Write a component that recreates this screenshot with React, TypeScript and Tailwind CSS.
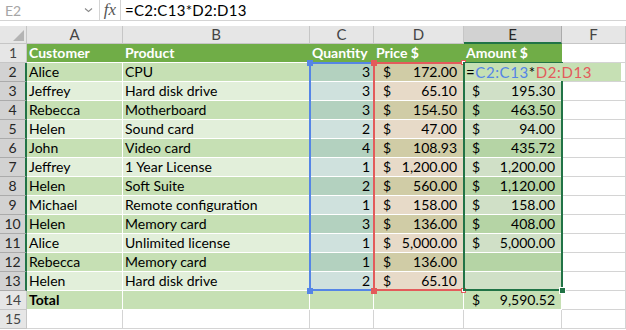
import React from "react";

const FONT = "font-['Lato','Liberation_Sans',sans-serif]";

type Row = [string, string, string, string, string];

const data: Row[] = [
  ["Alice", "CPU", "3", "172.00", "="],
  ["Jeffrey", "Hard disk drive", "3", "65.10", "195.30"],
  ["Rebecca", "Motherboard", "3", "154.50", "463.50"],
  ["Helen", "Sound card", "2", "47.00", "94.00"],
  ["John", "Video card", "4", "108.93", "435.72"],
  ["Jeffrey", "1 Year License", "1", "1,200.00", "1,200.00"],
  ["Helen", "Soft Suite", "2", "560.00", "1,120.00"],
  ["Michael", "Remote configuration", "1", "158.00", "158.00"],
  ["Helen", "Memory card", "3", "136.00", "408.00"],
  ["Alice", "Unlimited license", "1", "5,000.00", "5,000.00"],
  ["Rebecca", "Memory card", "1", "136.00", ""],
  ["Helen", "Hard disk drive", "2", "65.10", ""],
];

function ColHead({ label, active }: { label: string; active?: boolean }) {
  return (
    <div
      className={
        active
          ? "flex items-center justify-center border-r border-b-2 border-r-[#ababab] border-b-[#217346] bg-[#d2d2d2] text-[15px] text-[#262626]"
          : "flex items-center justify-center border-r border-b border-[#c6c6c6] bg-[#e6e6e6] text-[15px] text-[#444]"
      }
    >
      {label}
    </div>
  );
}

function RowHead({ n, active }: { n: number; active?: boolean }) {
  return (
    <div
      className={
        active
          ? "flex items-center justify-center border-b border-r-2 border-b-[#ababab] border-r-[#217346] bg-[#d2d2d2] text-[14px] text-[#262626]"
          : "flex items-center justify-center border-b border-r border-[#c6c6c6] bg-[#e6e6e6] text-[14px] text-[#444]"
      }
    >
      {n}
    </div>
  );
}

function Money({ value, bg, left }: { value: string; bg: string; left: string }) {
  return (
    <div className={`flex items-center justify-between border-r border-b border-white pr-[6px] text-[14px] ${left} ${bg}`}>
      {value && <span>$</span>}
      <span>{value}</span>
    </div>
  );
}

export default function App() {
  return (
    <div className={`relative h-[330px] w-[626px] overflow-hidden bg-white text-black ${FONT}`}>
      {/* formula bar */}
      <div className="flex h-[21px] border-b border-[#d4d4d4] bg-white">
        <div className="flex w-[100px] items-center justify-between border-r border-[#d4d4d4] pl-[5px] pr-[6px] text-[14px] text-[#a6a6a6]">
          <span>E2</span>
          <svg width="9" height="6" viewBox="0 0 9 6">
            <path d="M1 1.5 L4.5 4.5 L8 1.5" fill="none" stroke="#8a8a8a" strokeWidth="1.1" />
          </svg>
        </div>
        <div className="flex w-[21px] items-center justify-center border-r border-[#d4d4d4] font-['Liberation_Serif',serif] text-[17px] italic text-[#555]">
          fx
        </div>
        <div className="flex items-center pl-[4px] text-[15px] tracking-[0.3px]">=C2:C13*D2:D13</div>
      </div>
      <div className="h-[5px] bg-white" />

      {/* sheet */}
      <div className="relative grid grid-cols-[27px_96px_187px_64px_90px_98px_64px] grid-rows-[18px_repeat(15,19px)] leading-none">
        <div className="relative border-r border-b border-[#c6c6c6] bg-[#e6e6e6]">
          <svg className="absolute bottom-[2px] right-[2px]" width="11" height="11" viewBox="0 0 11 11">
            <polygon points="11,0 11,11 0,11" fill="#b4b4b4" />
          </svg>
        </div>
        <ColHead label="A" />
        <ColHead label="B" />
        <ColHead label="C" />
        <ColHead label="D" />
        <ColHead label="E" active />
        <ColHead label="F" />

        {/* row 1 */}
        <RowHead n={1} />
        {["Customer", "Product", "Quantity", "Price $", "Amount $"].map((h) => (
          <div key={h} className="flex items-center border-b border-white bg-[#70ad47] pl-[2px] text-[14px] font-bold text-white">
            {h}
          </div>
        ))}
        <div className="border-r border-b border-[#d4d4d4]" />

        {data.map((r, i) => {
          const odd = i % 2 === 0;
          return (
            <React.Fragment key={i}>
              <RowHead n={i + 2} active />
              <div className={`flex items-center border-r border-b border-white pl-[2px] text-[14px] ${odd ? "bg-[#c6e0b4]" : "bg-[#e2efda]"}`}>
                {r[0]}
              </div>
              <div className={`flex items-center border-r border-b border-white pl-[2px] text-[14px] ${odd ? "bg-[#c6e0b4]" : "bg-[#e2efda]"}`}>
                {r[1]}
              </div>
              <div className={`flex items-center justify-end border-r border-b border-white pr-[3px] text-[14px] ${odd ? "bg-[#b3d1bf]" : "bg-[#cfe1dd]"}`}>
                {r[2]}
              </div>
              <Money value={r[3]} bg={odd ? "bg-[#d0cca6]" : "bg-[#e7dac8]"} left="pl-[9px]" />
              {i === 0 ? (
                <div className="border-r border-b border-white bg-[#b5d4a5]" />
              ) : (
                <Money value={r[4]} bg={odd ? "bg-[#b5d4a5]" : "bg-[#d0e0c7]"} left="pl-[8px]" />
              )}
              <div className="border-r border-b border-[#d4d4d4]" />
            </React.Fragment>
          );
        })}

        {/* row 14 */}
        <RowHead n={14} />
        <div className="flex items-center border-r border-b border-white bg-[#c6e0b4] pl-[2px] text-[14px] font-bold">Total</div>
        <div className="border-r border-b border-white bg-[#c6e0b4]" />
        <div className="border-r border-b border-white bg-[#c6e0b4]" />
        <div className="border-r border-b border-white bg-[#c6e0b4]" />
        <Money value="9,590.52" bg="bg-[#c6e0b4]" left="pl-[8px]" />
        <div className="border-r border-b border-[#d4d4d4]" />

        {/* row 15 */}
        <RowHead n={15} />
        {[0, 1, 2, 3, 4, 5].map((k) => (
          <div key={k} className="border-r border-b border-[#d4d4d4]" />
        ))}

        {/* range references */}
        <div className="pointer-events-none absolute left-[309px] top-[36px] h-[229px] w-[66px] border-2 border-[#5585e6]" />
        <div className="pointer-events-none absolute left-[373px] top-[36px] h-[229px] w-[92px] border-2 border-[#e35b5b]" />
        <div className="absolute left-[307px] top-[34px] h-[6px] w-[6px] bg-[#5585e6]" />
        <div className="absolute left-[307px] top-[262px] h-[6px] w-[6px] bg-[#5585e6]" />
        <div className="absolute left-[371px] top-[34px] h-[6px] w-[6px] bg-[#e35b5b]" />
        <div className="absolute left-[371px] top-[262px] h-[6px] w-[6px] bg-[#e35b5b]" />
        <div className="absolute left-[461px] top-[34px] h-[5px] w-[5px] border border-[#e35b5b] bg-white" />
        <div className="absolute left-[461px] top-[262px] h-[5px] w-[5px] border border-[#e35b5b] bg-white" />

        {/* active selection */}
        <div className="pointer-events-none absolute left-[463px] top-[36px] h-[229px] w-[100px] border-2 border-[#217346]" />
        <div className="absolute left-[559px] top-[261px] h-[7px] w-[7px] border border-white bg-[#217346]" />

        {/* in-cell editor */}
        <div className="absolute left-[465px] top-[37px] flex h-[18px] w-[156px] items-center bg-[#c6e0b4] pl-[1px] text-[15px] tracking-[0.6px]">
          <span>=</span>
          <span className="text-[#5585e6]">C2:C13</span>
          <span>*</span>
          <span className="text-[#e35b5b]">D2:D13</span>
        </div>
      </div>
    </div>
  );
}
